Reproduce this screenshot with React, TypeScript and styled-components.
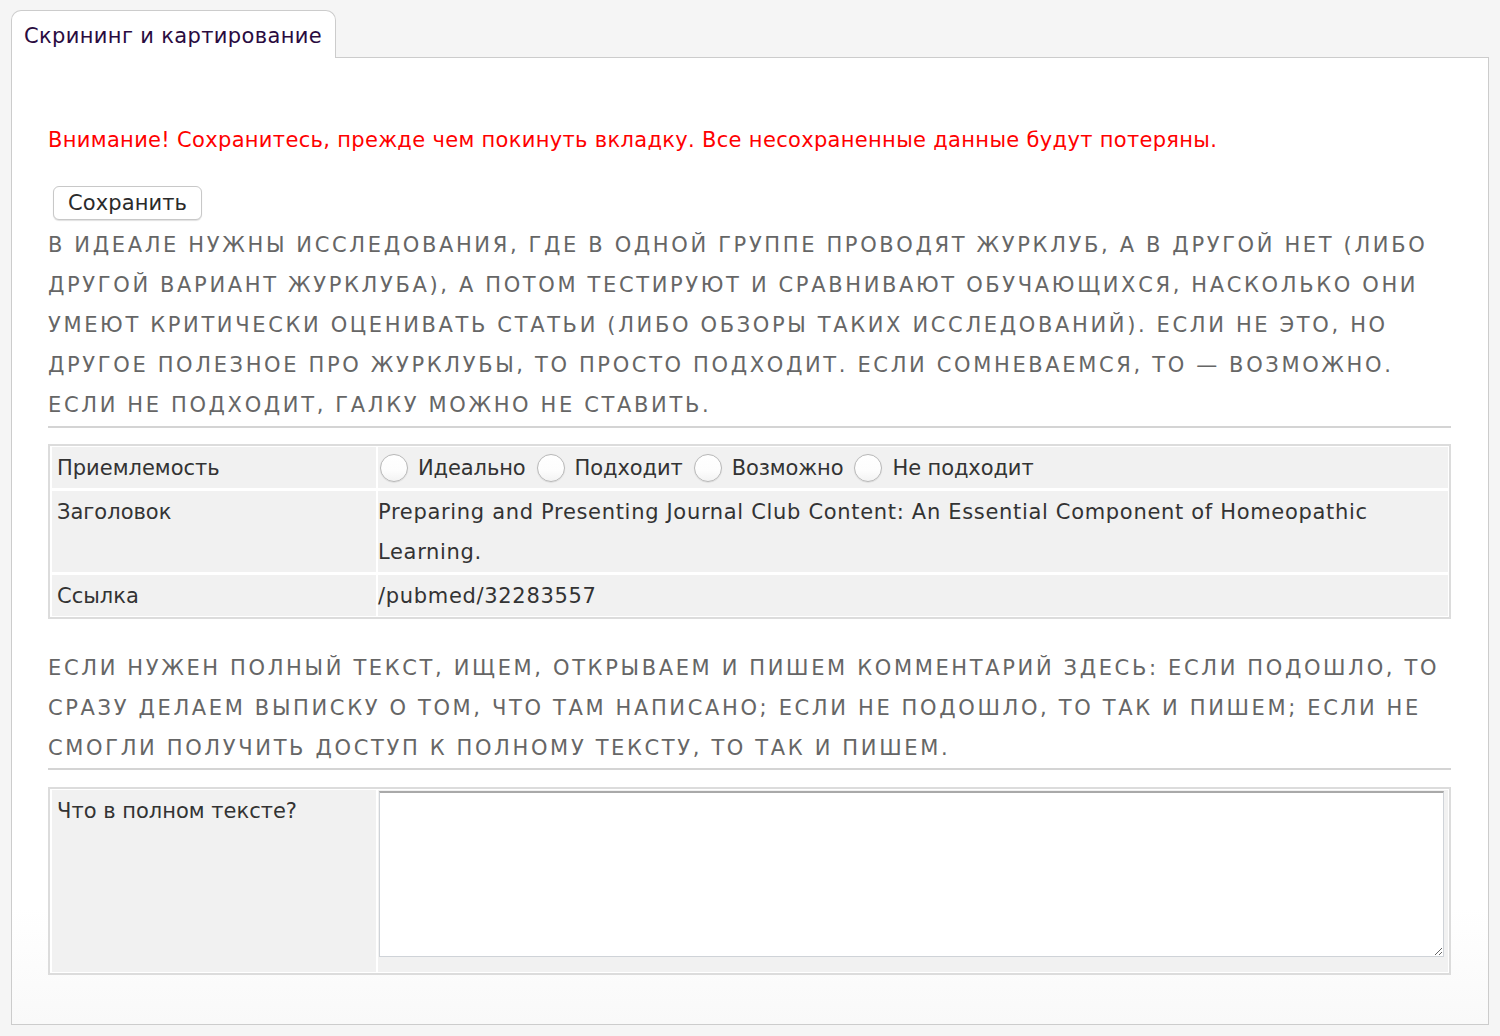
import React from "react";
import styled, { createGlobalStyle } from "styled-components";

const GlobalStyle = createGlobalStyle`
  html, body {
    margin: 0;
    padding: 0;
    background: #f5f5f5;
  }
  body {
    font-family: "DejaVu Sans", Verdana, sans-serif;
    font-size: 21px;
    letter-spacing: 0.2px;
    color: #333;
  }
  * { box-sizing: border-box; }
`;

const Page = styled.div`
  padding: 10px 11px 10px 11px;
  width: 1500px;
`;

const TabBar = styled.div`
  display: flex;
  margin-bottom: -1px;
  position: relative;
  z-index: 1;
`;

const Tab = styled.div`
  height: 48px;
  padding: 2px 13px 0 12px;
  display: flex;
  align-items: center;
  background: #fff;
  border: 1px solid #ccc;
  border-bottom: none;
  border-radius: 10px 10px 0 0;
  color: #2a0b3f;
  letter-spacing: 0.35px;
`;

const Panel = styled.div`
  border: 1px solid #ccc;
  background: linear-gradient(to bottom, #fff 0%, #fff 88%, #f9f9f9 100%);
  padding: 62px 37px 47px 36px;
  min-height: 968px;
`;

const Warning = styled.div`
  color: #ff0000;
  line-height: 40px;
  letter-spacing: 0.32px;
`;

const ButtonLine = styled.div`
  margin-top: 23px;
  height: 40px;
  display: flex;
  align-items: center;
  padding-left: 5px;
`;

const SaveButton = styled.button`
  font-family: "DejaVu Sans", Verdana, sans-serif;
  font-size: 21px;
  letter-spacing: 0.1px;
  color: #2a2a2a;
  background: #fff;
  border: 1px solid #c8c8c8;
  border-radius: 6px;
  height: 34px;
  padding: 0 14px;
  box-shadow: 0 1px 1px rgba(0, 0, 0, 0.12);
`;

const Instructions = styled.p<{ $top: number }>`
  margin: ${(p) => p.$top}px 0 0 0;
  color: #666;
  line-height: 40px;
  letter-spacing: 2.64px;
  text-transform: uppercase;
`;

const Rule = styled.hr<{ $top: number }>`
  margin: ${(p) => p.$top}px 0 0 0;
  border: none;
  height: 2px;
  background: #d4d4d4;
`;

const Grid = styled.div<{ $top: number }>`
  margin-top: ${(p) => p.$top}px;
  border: 2px solid #dcdcdc;
  background: #fff;
  padding: 1px 1px 1px 2px;
  display: grid;
  grid-template-columns: 324px 1fr;
  gap: 3px 2px;
`;

const LabelCell = styled.div`
  background: #f1f1f1;
  line-height: 40px;
  padding: 1px 5px 0 5px;
  color: #333;
  letter-spacing: 0;
`;

const ValueCell = styled.div<{ $bottom?: number; $latin?: boolean }>`
  background: #f1f1f1;
  line-height: 40px;
  padding: 1px 3px ${(p) => p.$bottom ?? 0}px 0;
  color: #333;
  display: flex;
  align-items: center;
  flex-wrap: wrap;
  letter-spacing: ${(p) => (p.$latin ? "0.68px" : "0.1px")};
`;

const RadioOption = styled.label`
  display: inline-flex;
  align-items: center;
  margin-right: 9px;
  letter-spacing: -0.1px;
`;

const RadioCircle = styled.span`
  width: 28px;
  height: 28px;
  margin: 0 10px 0 2px;
  border-radius: 50%;
  border: 1px solid #b8b8b8;
  background: linear-gradient(to bottom, #fff 0%, #fdfdfd 60%, #f3f3f3 100%);
  box-shadow: 0 0.5px 1px rgba(0, 0, 0, 0.12);
`;

const TextArea = styled.textarea`
  width: 1065px;
  height: 166px;
  margin: 0 0 0 1px;
  border: 1px solid #cfd3d8;
  border-top: 2px solid #a9a9a9;
  background: #fff;
  font-family: "DejaVu Sans", Verdana, sans-serif;
  font-size: 20px;
  resize: vertical;
  display: block;
`;

const TopCell = styled(ValueCell)`
  align-items: flex-start;
`;

const options = ["Идеально", "Подходит", "Возможно", "Не подходит"];

export default function App() {
  return (
    <Page>
      <GlobalStyle />
      <TabBar>
        <Tab>Скрининг и картирование</Tab>
      </TabBar>
      <Panel>
        <Warning>
          Внимание! Сохранитесь, прежде чем покинуть вкладку. Все несохраненные данные будут потеряны.
        </Warning>
        <ButtonLine>
          <SaveButton>Сохранить</SaveButton>
        </ButtonLine>
        <Instructions $top={2}>
          В идеале нужны исследования, где в одной группе проводят журклуб, а в другой нет (либо
          другой вариант журклуба), а потом тестируют и сравнивают обучающихся, насколько они
          умеют критически оценивать статьи (либо обзоры таких исследований). Если не это, но
          другое полезное про журклубы, то просто подходит. Если сомневаемся, то — возможно.
          Если не подходит, галку можно не ставить.
        </Instructions>
        <Rule $top={1} />
        <Grid $top={16}>
          <LabelCell>Приемлемость</LabelCell>
          <ValueCell>
            {options.map((o) => (
              <RadioOption key={o}>
                <RadioCircle />
                {o}
              </RadioOption>
            ))}
          </ValueCell>
          <LabelCell>Заголовок</LabelCell>
          <ValueCell $latin>
            Preparing and Presenting Journal Club Content: An Essential Component of Homeopathic
            Learning.
          </ValueCell>
          <LabelCell>Ссылка</LabelCell>
          <ValueCell $latin>/pubmed/32283557</ValueCell>
        </Grid>
        <Instructions $top={29}>
          Если нужен полный текст, ищем, открываем и пишем комментарий здесь: если подошло, то
          сразу делаем выписку о том, что там написано; если не подошло, то так и пишем; если не
          смогли получить доступ к полному тексту, то так и пишем.
        </Instructions>
        <Rule $top={0} />
        <Grid $top={17}>
          <LabelCell>Что в полном тексте?</LabelCell>
          <TopCell $bottom={15}>
            <TextArea />
          </TopCell>
        </Grid>
      </Panel>
    </Page>
  );
}
